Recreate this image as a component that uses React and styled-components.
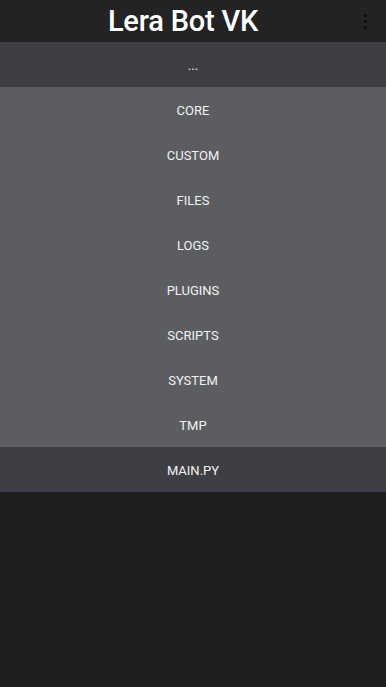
import React from "react";
import styled, { createGlobalStyle } from "styled-components";

const Global = createGlobalStyle`
  html, body { margin: 0; padding: 0; background: #1f1f1f; }
  body { font-family: Roboto, "Noto Sans", sans-serif; }
`;

const Page = styled.div`
  width: 386px;
  min-height: 687px;
  background: #1f1f1f;
  display: flex;
  flex-direction: column;
`;

const Header = styled.header`
  position: relative;
  height: 42px;
  background: #232323;
  display: flex;
  align-items: center;
  justify-content: center;
`;

const Title = styled.h1`
  margin: 0;
  padding-right: 20px;
  font-family: Roboto, "Noto Sans", sans-serif;
  font-weight: 500;
  font-size: 29px;
  letter-spacing: -0.2px;
  line-height: 42px;
  color: #ffffff;
`;

const MenuButton = styled.div`
  position: absolute;
  right: 19px;
  top: 14px;
  display: flex;
  flex-direction: column;
  gap: 3px;
`;

const Dot = styled.span`
  width: 3px;
  height: 3px;
  border-radius: 1px;
  background: #0e0e0e;
`;

const List = styled.nav`
  display: flex;
  flex-direction: column;
`;

const Row = styled.div`
  box-sizing: border-box;
  height: 45px;
  padding-top: 2px;
  display: flex;
  align-items: center;
  justify-content: center;
  background: ${(p) => (p.$dark ? "#3e3f44" : "#5c5d61")};
  color: #f2f2f2;
  font-family: Roboto, "Noto Sans", sans-serif;
  font-size: 13px;
`;

const items = [
  { label: "...", dark: true },
  { label: "CORE" },
  { label: "CUSTOM" },
  { label: "FILES" },
  { label: "LOGS" },
  { label: "PLUGINS" },
  { label: "SCRIPTS" },
  { label: "SYSTEM" },
  { label: "TMP" },
  { label: "MAIN.PY", dark: true },
];

export default function App() {
  return (
    <Page>
      <Global />
      <Header>
        <Title>Lera Bot VK</Title>
        <MenuButton>
          <Dot />
          <Dot />
          <Dot />
        </MenuButton>
      </Header>
      <List>
        {items.map((it) => (
          <Row key={it.label} $dark={it.dark}>
            {it.label}
          </Row>
        ))}
      </List>
    </Page>
  );
}
